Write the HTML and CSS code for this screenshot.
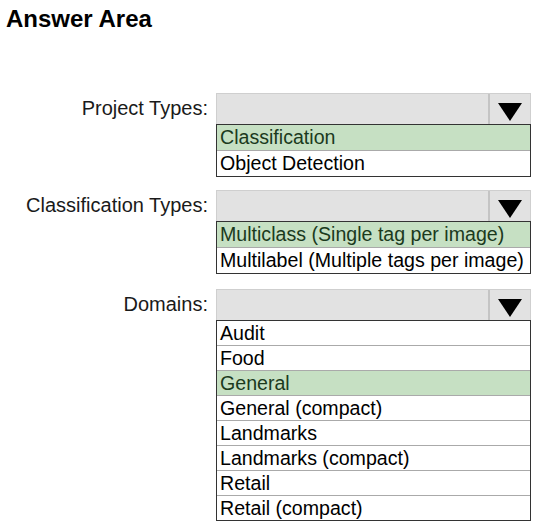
FILE: index.html
```html
<!DOCTYPE html>
<html lang="en">

<head>
    <meta charset="UTF-8">
    <meta name="viewport" content="width=device-width, initial-scale=1.0">
    <title>Answer Area</title>
    <link rel="stylesheet" href="styles.css">
</head>

<body>
    <h1 class="title">Answer Area</h1>
    <div class="form">
        <div class="field field-project">
            <span class="label">Project Types:</span>
            <div class="dropdown">
                <div class="select">
                    <span class="value"></span>
                    <span class="arrow">
                        <svg width="24" height="18" viewBox="0 0 24 18"><polygon points="0,0 24,0 12,18" fill="#000"/></svg>
                    </span>
                </div>
                <ul class="options">
                    <li class="selected">Classification</li>
                    <li>Object Detection</li>
                </ul>
            </div>
        </div>
        <div class="field field-class">
            <span class="label">Classification Types:</span>
            <div class="dropdown">
                <div class="select">
                    <span class="value"></span>
                    <span class="arrow">
                        <svg width="24" height="18" viewBox="0 0 24 18"><polygon points="0,0 24,0 12,18" fill="#000"/></svg>
                    </span>
                </div>
                <ul class="options">
                    <li class="selected">Multiclass (Single tag per image)</li>
                    <li>Multilabel (Multiple tags per image)</li>
                </ul>
            </div>
        </div>
        <div class="field field-domain">
            <span class="label">Domains:</span>
            <div class="dropdown">
                <div class="select">
                    <span class="value"></span>
                    <span class="arrow">
                        <svg width="24" height="18" viewBox="0 0 24 18"><polygon points="0,0 24,0 12,18" fill="#000"/></svg>
                    </span>
                </div>
                <ul class="options">
                    <li>Audit</li>
                    <li>Food</li>
                    <li class="selected">General</li>
                    <li>General (compact)</li>
                    <li>Landmarks</li>
                    <li>Landmarks (compact)</li>
                    <li>Retail</li>
                    <li>Retail (compact)</li>
                </ul>
            </div>
        </div>
    </div>
</body>

</html>
```
FILE: styles.css
```css
* {
    margin: 0;
    padding: 0;
    box-sizing: border-box;
}

body {
    background: #fff;
    color: #111;
    font-family: "Liberation Sans", Arial, sans-serif;
}

.title {
    margin: 5px 0 0 6px;
    font-size: 24px;
    line-height: 27px;
    font-weight: bold;
    color: #000;
}

.form {
    display: flex;
    flex-direction: column;
    padding-top: 61px;
}

.field {
    display: grid;
    grid-template-columns: 208px 315px;
    column-gap: 8px;
}

.field-class {
    margin-top: 13px;
}

.field-domain {
    margin-top: 15px;
}

.label {
    height: 31px;
    line-height: 30px;
    text-align: right;
    font-size: 20px;
    white-space: nowrap;
    color: #1a1a1a;
}

.select {
    display: flex;
    height: 31px;
    background: #e2e2e2;
    border: 1px solid #cfcfcf;
    border-bottom: none;
}

.value {
    flex: 1;
}

.arrow {
    display: flex;
    justify-content: center;
    padding-top: 9px;
    width: 42px;
    border-left: 2px solid #c4c4c4;
}

.options {
    list-style: none;
    border: 1px solid #333;
    background: #fff;
}

.options li {
    height: 26px;
    line-height: 25px;
    padding-left: 3px;
    font-size: 19.6px;
    white-space: nowrap;
    overflow: hidden;
    color: #000;
    border-top: 1px solid #aaa;
}

.options li:first-child {
    height: 25px;
    border-top: none;
}

.field-domain .options li {
    height: 25px;
    line-height: 24px;
}

.field-domain .options li:first-child {
    height: 24px;
}

.options .selected {
    background: #c6e0c3;
    color: #1b3a1d;
}
```
